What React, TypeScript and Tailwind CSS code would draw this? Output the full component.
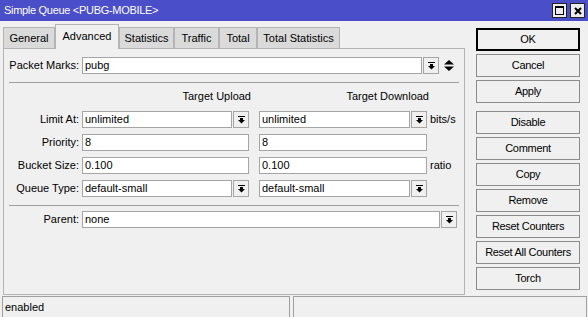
const font = { fontFamily: '"Liberation Sans", Arial, sans-serif' };

function DropArrow() {
    return (
        <svg width="7" height="8" viewBox="0 0 7 8" className="block">
            <rect x="0" y="0" width="7" height="1" fill="#000" />
            <rect x="2" y="2" width="3" height="2" fill="#000" />
            <polygon points="0,4 7,4 3.5,7.5" fill="#000" />
        </svg>
    );
}

function DropButton() {
    return (
        <div className="w-[16px] h-[17px] ml-[1px] border border-[#a5a5a5] bg-[#f0f0f0] flex items-center justify-center shrink-0">
            <DropArrow />
        </div>
    );
}

function Input({ value, w }: { value: string; w: string }) {
    return (
        <div className={`${w} h-[17px] border border-[#a5a5a5] bg-white pl-[2px] leading-[15px] text-black shrink-0 overflow-hidden whitespace-nowrap`}>
            {value}
        </div>
    );
}

function Label({ text }: { text: string }) {
    return <div className="w-[76px] pr-[1px] text-right shrink-0 mr-[2px] leading-[17px]">{text}</div>;
}

function Tab({ label, w, active }: { label: string; w: string; active?: boolean }) {
    if (active) {
        return (
            <div className={`${w} h-[25px] -mb-px relative z-10 bg-[#f0f0f0] border border-b-0 border-[#b4b4b4] flex items-center justify-center pb-[2px]`}>
                {label}
            </div>
        );
    }
    return (
        <div className={`${w} h-[21px] bg-[#dadada] border border-b-0 border-[#b4b4b4] flex items-center justify-center`}>
            {label}
        </div>
    );
}

function Btn({ label, primary, extra }: { label: string; primary?: boolean; extra?: string }) {
    return (
        <div
            className={`w-[104px] h-[23px] flex items-center justify-center bg-[#f0f0f0] tracking-[-0.3px] ${
                primary ? 'border-2 border-black' : 'border border-[#8c8c8c]'
            } ${extra ?? ''}`}
        >
            {label}
        </div>
    );
}

export default function App() {
    return (
        <div style={font} className="w-[588px] h-[317px] overflow-hidden bg-[#f0f0f0] flex flex-col text-[11px] text-black">
            <div className="h-[21px] bg-[#4a4ec8] flex items-center pl-[4px] pr-[3px] shrink-0">
                <span className="text-white text-[11px] tracking-[-0.3px]">Simple Queue &lt;PUBG-MOBILE&gt;</span>
                <div className="ml-auto flex gap-[3px]">
                    <div className="w-[15px] h-[15px] border border-[#222] bg-[#ececec] flex items-center justify-center">
                        <svg width="9" height="9" viewBox="0 0 9 9">
                            <rect x="0.5" y="0.5" width="8" height="8" fill="none" stroke="#000" />
                            <rect x="0" y="0" width="9" height="2" fill="#000" />
                        </svg>
                    </div>
                    <div className="w-[15px] h-[15px] border border-[#222] bg-[#ececec] flex items-center justify-center">
                        <svg width="8" height="8" viewBox="0 0 8 8">
                            <path d="M1 1 L7 7 M7 1 L1 7" stroke="#000" strokeWidth="2" />
                        </svg>
                    </div>
                </div>
            </div>

            <div className="flex h-[274px] shrink-0">
                <div className="w-[465px] pl-[3px] pt-[3px] flex flex-col shrink-0">
                    <div className="flex items-end h-[24px]">
                        <Tab label="General" w="w-[52px]" />
                        <Tab label="Advanced" w="w-[64px]" active />
                        <Tab label="Statistics" w="w-[55px]" />
                        <Tab label="Traffic" w="w-[45px]" />
                        <Tab label="Total" w="w-[38px]" />
                        <Tab label="Total Statistics" w="w-[83px]" />
                    </div>
                    <div className="h-[247px] border border-[#b4b4b4] flex flex-col pt-[8px]">
                        <div className="flex items-center">
                            <Label text="Packet Marks:" />
                            <Input value="pubg" w="w-[340px]" />
                            <DropButton />
                            <svg width="10" height="11" viewBox="0 0 10 11" className="ml-[5px]">
                                <polygon points="5,0 10,4.5 0,4.5" fill="#000" />
                                <polygon points="0,6.5 10,6.5 5,11" fill="#000" />
                            </svg>
                        </div>
                        <div className="ml-[5px] w-[450px] h-px bg-[#a0a0a0] mt-[8px]" />
                        <div className="flex mt-[6px] h-[14px] leading-[14px]">
                            <div className="w-[78px]" />
                            <div className="w-[169px] text-right">Target Upload</div>
                            <div className="w-[10px]" />
                            <div className="w-[168px] text-right">Target Download</div>
                        </div>
                        <div className="flex flex-col gap-[6px] mt-[8px]">
                            <div className="flex items-center">
                                <Label text="Limit At:" />
                                <Input value="unlimited" w="w-[150px]" />
                                <DropButton />
                                <div className="w-[10px]" />
                                <Input value="unlimited" w="w-[151px]" />
                                <DropButton />
                                <span className="ml-[3px]">bits/s</span>
                            </div>
                            <div className="flex items-center">
                                <Label text="Priority:" />
                                <Input value="8" w="w-[167px]" />
                                <div className="w-[10px]" />
                                <Input value="8" w="w-[168px]" />
                            </div>
                            <div className="flex items-center">
                                <Label text="Bucket Size:" />
                                <Input value="0.100" w="w-[167px]" />
                                <div className="w-[10px]" />
                                <Input value="0.100" w="w-[168px]" />
                                <span className="ml-[3px]">ratio</span>
                            </div>
                            <div className="flex items-center">
                                <Label text="Queue Type:" />
                                <Input value="default-small" w="w-[150px]" />
                                <DropButton />
                                <div className="w-[10px]" />
                                <Input value="default-small" w="w-[151px]" />
                                <DropButton />
                            </div>
                        </div>
                        <div className="ml-[5px] w-[450px] h-px bg-[#a0a0a0] mt-[8px]" />
                        <div className="flex items-center mt-[5px]">
                            <Label text="Parent:" />
                            <Input value="none" w="w-[358px]" />
                            <DropButton />
                        </div>
                    </div>
                </div>

                <div className="ml-[11px] pt-[7px] flex flex-col gap-[3px]">
                    <Btn label="OK" primary />
                    <Btn label="Cancel" />
                    <Btn label="Apply" />
                    <Btn label="Disable" extra="mt-[5px]" />
                    <Btn label="Comment" />
                    <Btn label="Copy" />
                    <Btn label="Remove" />
                    <Btn label="Reset Counters" />
                    <Btn label="Reset All Counters" />
                    <Btn label="Torch" />
                </div>
            </div>

            <div className="flex pt-[1px] pl-[2px] gap-[3px] h-[23px] shrink-0">
                <div className="w-[288px] h-[22px] border border-[#a0a0a0] pl-[2px] leading-[20px]">enabled</div>
                <div className="w-[294px] h-[22px] border border-[#a0a0a0]" />
            </div>
        </div>
    );
}
